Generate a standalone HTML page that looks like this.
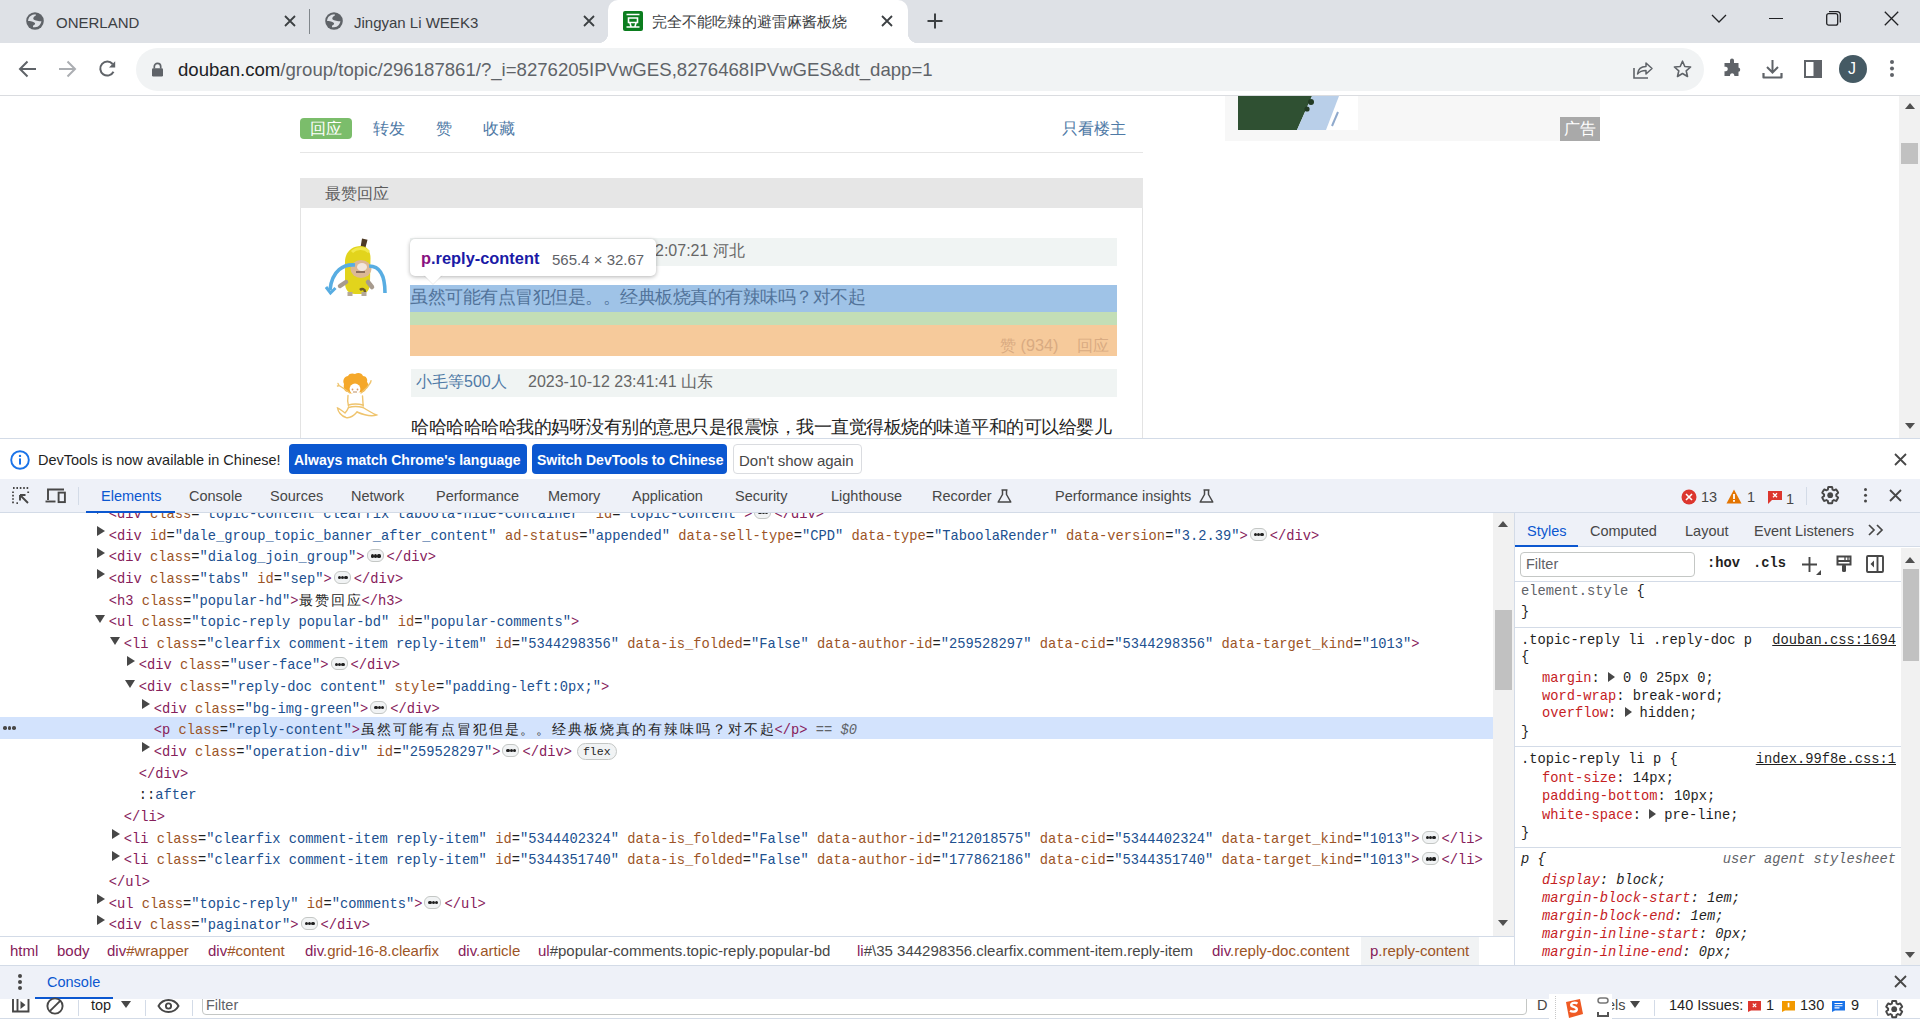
<!DOCTYPE html>
<html><head><meta charset="utf-8">
<style>
*{box-sizing:border-box;margin:0;padding:0}
html,body{width:1920px;height:1020px;overflow:hidden;background:#fff;font-family:"Liberation Sans",sans-serif;color:#202124}
.a{position:absolute}
.t{position:absolute;white-space:nowrap;line-height:1}
svg{position:absolute;overflow:visible}
/* chrome */
#tabstrip{left:0;top:0;width:1920px;height:43px;background:#dee1e6}
#toolbar{left:0;top:43px;width:1920px;height:53px;background:#fff;border-bottom:1px solid #dadce0}
#omni{left:136px;top:48px;width:1568px;height:43px;border-radius:22px;background:#f1f3f4}
/* page */
#page{left:0;top:96px;width:1920px;height:342px;background:#fff;overflow:hidden}
.pg{font-family:"Liberation Sans",sans-serif}
/* devtools */
#dt{left:0;top:438px;width:1920px;height:582px;background:#fff;border-top:1px solid #d3dbe7;overflow:hidden}
.mono{font-family:"Liberation Mono",monospace}
.ui{font-size:14.5px;color:#474747}
.bcr{font-size:15px}
.b14{font-size:14px;font-weight:bold}
.k i{display:inline-block;font-style:normal;text-align:center;width:16px}
.k15 i{width:15px}.k175 i{width:17.5px}.k16 i{width:16px}.k1575 i{width:15.75px}.k1604 i{width:15.95px}
.nocjk .k i{-webkit-text-fill-color:transparent;position:relative}
.nocjk .k i::before{content:"";position:absolute;left:.06em;right:.06em;top:.1em;height:.84em;opacity:.7;background:linear-gradient(currentColor,currentColor) 0 0/100% .1em no-repeat,linear-gradient(currentColor,currentColor) 0 50%/100% .1em no-repeat,linear-gradient(currentColor,currentColor) 0 100%/100% .1em no-repeat,linear-gradient(currentColor,currentColor) 0 0/.1em 100% no-repeat,linear-gradient(currentColor,currentColor) 50% 0/.1em 100% no-repeat,linear-gradient(currentColor,currentColor) 100% 0/.1em 100% no-repeat}
.b{font-weight:bold}
.er{position:absolute;white-space:pre;font-family:"Liberation Mono",monospace;font-size:13.75px;line-height:21.64px;color:#1f1f1f}
.tg{color:#86205a}.an{color:#9c5426}.av{color:#20508f}
.cjk{display:inline-block;overflow:hidden;vertical-align:top;font-size:16px;height:21px}.pu{color:#1f1f1f}.tx{color:#1f1f1f}
.ps{color:#20508f}
.eq{color:#5f6368}.eq i{font-style:italic}
.bd{display:inline-block;position:relative;width:17px;height:13px;margin:0 3px 0 2px;vertical-align:-1px;border:1px solid #c4c7c5;border-radius:6px;background:#f1f3f4}
.bd i{position:absolute;top:4.1px;width:3.2px;height:3.2px;border-radius:50%;background:#1f1f1f}
.bd i:nth-child(1){left:3px}.bd i:nth-child(2){left:6.4px}.bd i:nth-child(3){left:9.8px}
.fx{display:inline-block;margin-left:5px;padding:0 5px;height:17px;line-height:15px;border:1px solid #c4c7c5;border-radius:9px;background:#f1f3f4;font-size:11.5px;vertical-align:1px;color:#1f1f1f}
.trr{width:0;height:0;border-left:8px solid #474747;border-top:5.4px solid transparent;border-bottom:5.4px solid transparent}
.trd{width:0;height:0;border-top:8px solid #474747;border-left:5.4px solid transparent;border-right:5.4px solid transparent}
.dots3 i{position:absolute;top:0;width:3.5px;height:3.5px;border-radius:50%;background:#474747}
.dots3 i:nth-child(1){left:0}.dots3 i:nth-child(2){left:4.5px}.dots3 i:nth-child(3){left:9px}
.bt{color:#86205a}.bc{color:#9c5426}.bg{color:#474747}
.sr{position:absolute;white-space:pre;font-family:"Liberation Mono",monospace;font-size:13.75px;line-height:18px;color:#1f1f1f}
.sr.it{font-style:italic}
.sel0{color:#5f6368}
.pn{color:#c5221f}
.lnk{text-decoration:underline;color:#1f1f1f}
.ua{font-style:italic;color:#5f6368}
.str{display:inline-block;width:0;height:0;border-left:7px solid #474747;border-top:5px solid transparent;border-bottom:5px solid transparent;margin-right:8px;vertical-align:0px}
</style></head><body>
<!-- ============ TAB STRIP ============ -->
<div id="tabstrip" class="a">
  <!-- tab 1 -->
  <svg style="left:26px;top:12px" width="18" height="18" viewBox="0 0 18 18"><circle cx="9" cy="9" r="8.8" fill="#5f6368"/><path d="M2.05 8.9C2.5 5 5 2.5 9.7 2.3L9.7 3.8C8 4.5 7.2 5.5 7.3 6.9C8 8 10 8.4 11.1 8.65C12.5 9 14 9.2 15.4 9.2C15 12 13 15 9 15.3L7 15.3L7 13.8C8 13.3 9.1 12.5 9.1 11.5C9 10.5 8 10 6 9.4C4.5 9 3 8.9 2.05 8.9Z" fill="#dee1e6"/></svg>
  <div class="t" style="left:56px;top:15px;font-size:15px;color:#3c4043">ONERLAND</div>
  <svg style="left:284px;top:15px" width="12" height="12" viewBox="0 0 12 12"><path d="M1 1L11 11M11 1L1 11" stroke="#3c4043" stroke-width="1.8"/></svg>
  <div class="a" style="left:309px;top:9px;width:1px;height:25px;background:#80868b"></div>
  <!-- tab 2 -->
  <svg style="left:325px;top:12px" width="18" height="18" viewBox="0 0 18 18"><circle cx="9" cy="9" r="8.8" fill="#5f6368"/><path d="M2.05 8.9C2.5 5 5 2.5 9.7 2.3L9.7 3.8C8 4.5 7.2 5.5 7.3 6.9C8 8 10 8.4 11.1 8.65C12.5 9 14 9.2 15.4 9.2C15 12 13 15 9 15.3L7 15.3L7 13.8C8 13.3 9.1 12.5 9.1 11.5C9 10.5 8 10 6 9.4C4.5 9 3 8.9 2.05 8.9Z" fill="#dee1e6"/></svg>
  <div class="t" style="left:354px;top:15px;font-size:15px;color:#3c4043">Jingyan Li WEEK3</div>
  <svg style="left:583px;top:15px" width="12" height="12" viewBox="0 0 12 12"><path d="M1 1L11 11M11 1L1 11" stroke="#3c4043" stroke-width="1.8"/></svg>
  <!-- active tab -->
  <div class="a" style="left:608px;top:0px;width:300px;height:43px;background:#fff;border-radius:10px 10px 0 0"></div>
  <div class="a" style="left:598px;top:33px;width:10px;height:10px;background:radial-gradient(circle at 0 0,#dee1e6 10px,#fff 10.5px)"></div>
  <div class="a" style="left:908px;top:33px;width:10px;height:10px;background:radial-gradient(circle at 100% 0,#dee1e6 10px,#fff 10.5px)"></div>
  <div class="a" style="left:623px;top:11px;width:20px;height:20px;background:#0b7d1e;border-radius:2px"></div>
  <svg style="left:623px;top:11px" width="20" height="20" viewBox="0 0 20 20"><path d="M3.5 3.5h13M5.5 7h9v4.5h-9zM3.5 16h13M7 12l1 3.5M13 12l-1 3.5" stroke="#fff" stroke-width="1.6" fill="none"/></svg>
  <div class="t k k15" style="left:652px;top:14px;font-size:15px;color:#3c4043"><i>完</i><i>全</i><i>不</i><i>能</i><i>吃</i><i>辣</i><i>的</i><i>避</i><i>雷</i><i>麻</i><i>酱</i><i>板</i><i>烧</i></div>
  <svg style="left:881px;top:15px" width="12" height="12" viewBox="0 0 12 12"><path d="M1 1L11 11M11 1L1 11" stroke="#3c4043" stroke-width="1.8"/></svg>
  <!-- new tab -->
  <svg style="left:926px;top:12px" width="18" height="18" viewBox="0 0 18 18"><path d="M9 1.5V16.5M1.5 9H16.5" stroke="#3c4043" stroke-width="2"/></svg>
  <!-- window controls -->
  <svg style="left:1711px;top:14px" width="16" height="9" viewBox="0 0 16 9"><path d="M1 1L8 8L15 1" stroke="#202124" stroke-width="1.3" fill="none"/></svg>
  <div class="a" style="left:1769px;top:17.5px;width:14px;height:1.3px;background:#202124"></div>
  <svg style="left:1826px;top:11px" width="15" height="15" viewBox="0 0 15 15"><rect x="0.7" y="2.7" width="11" height="11.5" rx="2" stroke="#202124" stroke-width="1.3" fill="none"/><path d="M3 0.7h8.3a3 3 0 0 1 3 3V11.5" stroke="#202124" stroke-width="1.3" fill="none"/></svg>
  <svg style="left:1884px;top:11px" width="15" height="15" viewBox="0 0 15 15"><path d="M0.8 0.8L14.2 14.2M14.2 0.8L0.8 14.2" stroke="#202124" stroke-width="1.3"/></svg>
</div>
<!-- ============ TOOLBAR ============ -->
<div id="toolbar" class="a"></div>
<svg style="left:18px;top:60px" width="19" height="18" viewBox="0 0 19 18"><path d="M18 9H2.5M9.5 1.5L2 9l7.5 7.5" stroke="#5f6368" stroke-width="2" fill="none"/></svg>
<svg style="left:58px;top:60px" width="19" height="18" viewBox="0 0 19 18"><path d="M1 9h15.5M9.5 1.5L17 9l-7.5 7.5" stroke="#abaeb2" stroke-width="2" fill="none"/></svg>
<svg style="left:98px;top:60px" width="20" height="18" viewBox="0 0 20 18"><path d="M15.5 11.8A7 7 0 1 1 14.6 4" stroke="#5f6368" stroke-width="2" fill="none"/><path d="M17.2 1.2V7.5H11z" fill="#5f6368"/></svg>
<div id="omni" class="a"></div>
<svg style="left:151px;top:62px" width="13" height="15" viewBox="0 0 13 15"><path d="M3.3 6.5V4.5a3.2 3.2 0 0 1 6.4 0v2" stroke="#5f6368" stroke-width="1.7" fill="none"/><rect x="1" y="6.3" width="11" height="8.2" rx="1.2" fill="#5f6368"/></svg>
<div class="t" style="left:178px;top:60.5px;font-size:18.6px;color:#5f6368"><span style="color:#202124">douban.com</span>/group/topic/296187861/?_i=8276205IPVwGES,8276468IPVwGES&amp;dt_dapp=1</div>
<svg style="left:1633px;top:60px" width="20" height="19" viewBox="0 0 20 19"><path d="M1 8v10h14" stroke="#5f6368" stroke-width="1.6" fill="none"/><path d="M4.5 14c.5-4.5 3.5-7.5 8.5-7.5V3l6 5.5-6 5.5v-3.5c-3.5 0-6.5 1-8.5 3.5z" stroke="#5f6368" stroke-width="1.5" fill="none" stroke-linejoin="round"/></svg>
<svg style="left:1673px;top:60px" width="19" height="18" viewBox="0 0 19 18"><path d="M9.5 1.2l2.3 5.3 5.8.5-4.4 3.8 1.3 5.7-5-3-5 3 1.3-5.7L1.4 7l5.8-.5z" stroke="#5f6368" stroke-width="1.6" fill="none" stroke-linejoin="round"/></svg>
<svg style="left:1723px;top:59px" width="19" height="19" viewBox="0 0 19 19"><path d="M7 1.5a2 2 0 0 1 4 0V4h4.5v4.5a2.2 2.2 0 0 1 0 4.3V17H11.3v-1a2.2 2.2 0 0 0-4.3 0v1H1.5v-4.7H3a2.3 2.3 0 0 0 0-4.5H1.5V4H7z" fill="#5f6368"/></svg>
<svg style="left:1762px;top:59px" width="21" height="20" viewBox="0 0 21 20"><path d="M10.5 1v12M5 8l5.5 5.5L16 8" stroke="#5f6368" stroke-width="2" fill="none"/><path d="M1.5 14v4.5h18V14" stroke="#5f6368" stroke-width="2.2" fill="none" stroke-linejoin="round"/></svg>
<svg style="left:1804px;top:60px" width="18" height="18" viewBox="0 0 18 18"><rect x="1" y="1" width="16" height="16" fill="none" stroke="#5f6368" stroke-width="2"/><rect x="9.5" y="1" width="7.5" height="16" fill="#5f6368"/></svg>
<div class="a" style="left:1839px;top:55px;width:28px;height:28px;border-radius:50%;background:#455a64"></div>
<div class="t" style="left:1848px;top:61px;font-size:16px;color:#fff">J</div>
<div class="a" style="left:1890px;top:60px;width:4px;height:4px;border-radius:50%;background:#5f6368;box-shadow:0 6.5px 0 #5f6368,0 13px 0 #5f6368"></div>

<!-- ============ PAGE ============ -->
<div id="page" class="a">
  <!-- action row -->
  <div class="a" style="left:300px;top:22px;width:52px;height:21px;background:#7bbd6b;border-radius:4px"></div>
  <div class="t k k16" style="left:310px;top:25px;font-size:16px;color:#fff"><i>回</i><i>应</i></div>
  <div class="t k k16" style="left:373px;top:25px;font-size:16px;color:#4f7aa6"><i>转</i><i>发</i></div>
  <div class="t k k16" style="left:436px;top:25px;font-size:16px;color:#4f7aa6"><i>赞</i></div>
  <div class="t k k16" style="left:483px;top:25px;font-size:16px;color:#4f7aa6"><i>收</i><i>藏</i></div>
  <div class="t k k16" style="left:1062px;top:25px;font-size:16px;color:#4f7aa6"><i>只</i><i>看</i><i>楼</i><i>主</i></div>
  <div class="a" style="left:300px;top:56px;width:843px;height:1px;background:#e6e6e6"></div>
  <!-- popular header -->
  <div class="a" style="left:300px;top:82px;width:843px;height:30px;background:#e6e6e6"></div>
  <div class="t k k16" style="left:325px;top:90px;font-size:16px;color:#5c5c5c"><i>最</i><i>赞</i><i>回</i><i>应</i></div>
  <div class="a" style="left:300px;top:112px;width:843px;height:260px;border-left:1px solid #e3e3e3;border-right:1px solid #e3e3e3"></div>
  <!-- comment 1 -->
  <svg style="left:322px;top:138px" width="70" height="70" viewBox="0 0 70 70">
    <path d="M40 4.5l5.5 1.2-2.2 8.5-4.8-.8z" fill="#4d3a25"/>
    <path d="M39 12c6 0 9.5 5 9.5 12l-.5 24c0 8-3 12-9 12h-6c-6 0-10-4-10-11V28c0-9 6-16 16-16z" fill="#e2d41c"/>
    <path d="M30 18c4-4 12-5 17 0" stroke="#f1e84a" stroke-width="3" fill="none"/>
    <ellipse cx="39" cy="35" rx="10.5" ry="9" fill="#dcb895"/>
    <ellipse cx="40" cy="33" rx="5" ry="4" fill="#f3e7de"/>
    <path d="M34 38h9" stroke="#8b6f5b" stroke-width="2"/>
    <path d="M18 52l6-4M46 48l4 5" stroke="#a79b8e" stroke-width="4.5" stroke-linecap="round"/>
    <path d="M28 58v4M42 58v4" stroke="#b4a898" stroke-width="5"/>
    <path d="M38 56c2-2 5-1 5 2" stroke="#6b5a2a" stroke-width="2.5" fill="none"/>
    <path d="M33 31C22 30 10 36 8 56" stroke="#58ade2" stroke-width="3.6" fill="none"/>
    <path d="M47 32C57 32 63 40 63 59" stroke="#58ade2" stroke-width="3.6" fill="none"/>
    <path d="M4 53l4.5 6 5-5" stroke="#58ade2" stroke-width="3" fill="none"/>
  </svg>
  <div class="a" style="left:410px;top:142px;width:707px;height:28px;background:#f0f4f3"></div>
  <div class="t k k16" style="left:655px;top:147px;font-size:16px;color:#666">2:07:21 <i>河</i><i>北</i></div>
  <div class="a" style="left:410px;top:189px;width:707px;height:27px;background:#9fc3e7"></div>
  <div class="a" style="left:410px;top:216px;width:707px;height:13px;background:#c3deb6"></div>
  <div class="a" style="left:410px;top:229px;width:707px;height:31px;background:#f6ca9b"></div>
  <div class="t k k175" style="left:410px;top:193px;font-size:17.5px;letter-spacing:-0.5px;color:#52739a"><i>虽</i><i>然</i><i>可</i><i>能</i><i>有</i><i>点</i><i>冒</i><i>犯</i><i>但</i><i>是</i><i>。</i><i>。</i><i>经</i><i>典</i><i>板</i><i>烧</i><i>真</i><i>的</i><i>有</i><i>辣</i><i>味</i><i>吗</i><i>？</i><i>对</i><i>不</i><i>起</i></div>
  <div class="t k k16" style="left:1000px;top:241px;font-size:16.25px;color:#d9ab82"><i>赞</i> (934)</div><div class="t k k16" style="left:1077px;top:241px;font-size:16.25px;color:#d9ab82"><i>回</i><i>应</i></div>
  <!-- tooltip -->
  <div class="a" style="left:410px;top:143px;width:246px;height:37px;background:#fff;border-radius:5px;box-shadow:0 1px 4px rgba(0,0,0,.3)"></div>
  <svg style="left:424px;top:179px" width="18" height="10" viewBox="0 0 18 10"><path d="M0 0L9 9L18 0z" fill="#fff"/><path d="M0 0.5L9 9.5L18 0.5" stroke="rgba(0,0,0,.08)" fill="none"/></svg>
  <div class="t" style="left:421px;top:154px;font-size:16.4px;font-weight:bold;color:#1a1aa6"><span style="color:#881280">p</span>.reply-content</div>
  <div class="t" style="left:552px;top:156px;font-size:15px;color:#5f6368">565.4 × 32.67</div>
  <!-- comment 2 -->
  <svg style="left:330px;top:272px" width="55" height="55" viewBox="0 0 55 55">
    <path d="M14 16c-2-4 1-8 4-8 1-3 5-3 7-2 3-2 7-1 8 2 3 0 5 3 4 6 2 2 1 6-1 7-1 3-4 4-6 3-3 2-9 2-12 0-3 0-5-3-4-8z" fill="#f5a82a"/>
    <circle cx="25" cy="21" r="5.4" fill="#fff"/>
    <circle cx="22.5" cy="21.5" r=".9" fill="#d49a6a"/><circle cx="27.5" cy="21.5" r=".9" fill="#d49a6a"/><path d="M23 24h4" stroke="#c9a07a" stroke-width="1.2"/>
    <g stroke="#efc46e" stroke-width="1.4" fill="none" stroke-linecap="round">
    <path d="M20 25L13 20L9 17.5M9 17.5l-1-2M9 17.5l-1.5.5"/>
    <path d="M31 25L37 19.5L40.5 14.5M40.5 14.5l.5-1.8"/>
    <path d="M18 27.5C17.5 31 17.5 35 18.5 38"/>
    <path d="M32.5 28C32.8 32 33 35 33.2 38"/>
    <path d="M18.5 37C22 36 29 36 33 37M18.5 39.5C22 38.5 29 38.5 33 39.5"/>
    <path d="M18.5 39.5C17.5 42 16.5 43.5 15 45C12 43 9.5 40.5 7.5 40C8 43.5 11 48 16 49.5C20.5 50.5 24 47.5 27 44"/>
    <path d="M33 39.5C37 42 42 45 46.5 47C42 48.5 35 47.5 27 44"/>
    </g>
  </svg>
  <div class="a" style="left:411px;top:273px;width:706px;height:28px;background:#f0f4f3"></div>
  <div class="t k k16" style="left:416px;top:278px;font-size:16px;color:#4f7aa6"><i>小</i><i>毛</i><i>等</i>500<i>人</i></div>
  <div class="t k k16" style="left:528px;top:278px;font-size:16px;color:#666">2023-10-12 23:41:41 <i>山</i><i>东</i></div>
  <div class="t k k175" style="left:411px;top:323px;font-size:17.5px;letter-spacing:-0.5px;color:#222"><i>哈</i><i>哈</i><i>哈</i><i>哈</i><i>哈</i><i>哈</i><i>我</i><i>的</i><i>妈</i><i>呀</i><i>没</i><i>有</i><i>别</i><i>的</i><i>意</i><i>思</i><i>只</i><i>是</i><i>很</i><i>震</i><i>惊</i><i>，</i><i>我</i><i>一</i><i>直</i><i>觉</i><i>得</i><i>板</i><i>烧</i><i>的</i><i>味</i><i>道</i><i>平</i><i>和</i><i>的</i><i>可</i><i>以</i><i>给</i><i>婴</i><i>儿</i></div>
  <!-- ad -->
  <div class="a" style="left:1225px;top:0px;width:375px;height:45px;background:#f7f7f7"></div>
  <div class="a" style="left:1238px;top:0px;width:120px;height:34px;background:#fff"></div>
  <svg style="left:1238px;top:0px" width="120" height="34" viewBox="0 0 120 34"><path d="M0 0H74L59 34H0z" fill="#2f5032"/><path d="M74 0H101L88 34H59z" fill="#b9cfe9"/><circle cx="73" cy="6" r="3" fill="#223a24"/><circle cx="69" cy="13" r="2.6" fill="#223a24"/><path d="M100 16l-6 14" stroke="#8fa9cc" stroke-width="2"/></svg>
  <div class="a" style="left:1560px;top:21px;width:40px;height:24px;background:#a9a9a9"></div>
  <div class="t k k16" style="left:1564px;top:25px;font-size:16px;color:#fff"><i>广</i><i>告</i></div>
  <!-- scrollbar -->
  <div class="a" style="left:1899px;top:0;width:21px;height:342px;background:#f1f1f1"></div>
  <svg style="left:1905px;top:7px" width="10" height="6" viewBox="0 0 10 6"><path d="M0 6L5 0L10 6z" fill="#505050"/></svg>
  <div class="a" style="left:1901px;top:47px;width:17px;height:21px;background:#c1c1c1"></div>
  <svg style="left:1905px;top:327px" width="10" height="6" viewBox="0 0 10 6"><path d="M0 0L5 6L10 0z" fill="#505050"/></svg>
</div>

<!-- ============ DEVTOOLS ============ -->
<div id="dt" class="a">
<!-- infobar -->
<svg style="left:10px;top:11px" width="20" height="20" viewBox="0 0 20 20"><circle cx="10" cy="10" r="8.8" stroke="#1a73e8" stroke-width="1.9" fill="none"/><circle cx="10" cy="5.9" r="1.2" fill="#1a73e8"/><rect x="9" y="8.3" width="2" height="6.4" rx=".8" fill="#1a73e8"/></svg>
<div class="t ui" style="left:38px;top:14px;color:#1f1f1f">DevTools is now available in Chinese!</div>
<div class="a" style="left:289px;top:5px;width:238px;height:30px;background:#0b57d0;border-radius:4px"></div>
<div class="t ui b14" style="left:294px;top:14px;color:#fff">Always match Chrome's language</div>
<div class="a" style="left:532px;top:5px;width:195px;height:30px;background:#0b57d0;border-radius:4px"></div>
<div class="t ui b14" style="left:537px;top:14px;color:#fff">Switch DevTools to Chinese</div>
<div class="a" style="left:733px;top:5px;width:129px;height:30px;background:#fff;border:1px solid #dadce0;border-radius:4px"></div>
<div class="t ui" style="left:739px;top:13.5px;font-size:15px;color:#474747">Don't show again</div>
<svg style="left:1894px;top:14px" width="13" height="13" viewBox="0 0 13 13"><path d="M1 1L12 12M12 1L1 12" stroke="#474747" stroke-width="1.8"/></svg>
<!-- main tab bar -->
<div class="a" style="left:0;top:40px;width:1920px;height:34px;background:#eef1f8;border-bottom:1px solid #d3dbe7"></div>
<svg style="left:12px;top:48px" width="18" height="18" viewBox="0 0 18 18"><path d="M1 1h1.6M4.4 1h1.6M7.8 1h1.6M11.2 1h1.6M14.6 1h1.6M1 4.4v1.6M1 7.8v1.6M1 11.2v1.6M1 14.6v1.6M4.4 16.2h1.6M16.2 4.4v1.6" stroke="#474747" stroke-width="1.8"/><path d="M8 8l8 8M8 8h5.5M8 8v5.5" stroke="#474747" stroke-width="1.9" fill="none"/></svg>
<svg style="left:45px;top:48px" width="22" height="17" viewBox="0 0 22 17"><path d="M3 13V2.5h16" stroke="#474747" stroke-width="1.9" fill="none"/><path d="M0.5 14.5h10" stroke="#474747" stroke-width="1.9"/><rect x="13.6" y="5.6" width="6.3" height="9.5" stroke="#474747" stroke-width="1.9" fill="none"/></svg>
<div class="a" style="left:78px;top:48px;width:1px;height:18px;background:#d3dbe7"></div>
<div class="t ui" style="left:101px;top:50px;color:#0b57d0">Elements</div>
<div class="a" style="left:86px;top:72px;width:89px;height:2px;background:#0b57d0"></div>
<div class="t ui" style="left:189px;top:50px">Console</div>
<div class="t ui" style="left:270px;top:50px">Sources</div>
<div class="t ui" style="left:351px;top:50px">Network</div>
<div class="t ui" style="left:436px;top:50px">Performance</div>
<div class="t ui" style="left:548px;top:50px">Memory</div>
<div class="t ui" style="left:632px;top:50px">Application</div>
<div class="t ui" style="left:735px;top:50px">Security</div>
<div class="t ui" style="left:831px;top:50px">Lighthouse</div>
<div class="t ui" style="left:932px;top:50px">Recorder</div>
<svg style="left:997px;top:50px" width="15" height="14" viewBox="0 0 15 14"><path d="M4.5 1h6M5.5 1v4.5L1.2 13h12.6L9.5 5.5V1" stroke="#474747" stroke-width="1.5" fill="none" stroke-linejoin="round"/></svg>
<div class="t ui" style="left:1055px;top:50px">Performance insights</div>
<svg style="left:1199px;top:50px" width="15" height="14" viewBox="0 0 15 14"><path d="M4.5 1h6M5.5 1v4.5L1.2 13h12.6L9.5 5.5V1" stroke="#474747" stroke-width="1.5" fill="none" stroke-linejoin="round"/></svg>
<!-- right icons -->
<svg style="left:1681px;top:50px" width="16" height="16" viewBox="0 0 16 16"><circle cx="8" cy="8" r="7.5" fill="#dc362e"/><path d="M5 5l6 6M11 5l-6 6" stroke="#fff" stroke-width="1.6"/></svg>
<div class="t ui" style="left:1701px;top:51px">13</div>
<svg style="left:1726px;top:50px" width="16" height="15" viewBox="0 0 16 15"><path d="M8 .5L15.5 14.5H.5z" fill="#e37400"/><rect x="7.1" y="5" width="1.8" height="5" fill="#fff"/><rect x="7.1" y="11" width="1.8" height="1.8" fill="#fff"/></svg>
<div class="t ui" style="left:1747px;top:51px">1</div>
<svg style="left:1768px;top:51px" width="14" height="14" viewBox="0 0 14 14"><path d="M0 1h14v9H4l-4 4z" fill="#dc362e"/><path d="M5 3.3l4 4M9 3.3l-4 4" stroke="#fff" stroke-width="1.3"/></svg>
<div class="t ui" style="left:1786px;top:53px">1</div>
<div class="a" style="left:1806px;top:48px;width:1px;height:18px;background:#d3dbe7"></div>
<svg style="left:1820.2px;top:46.3px" width="20.4" height="20.4" viewBox="0 0 24 24"><path d="M19.14 12.94c.04-.3.06-.61.06-.94 0-.32-.02-.64-.07-.94l2.03-1.58c.18-.14.23-.41.12-.61l-1.92-3.32c-.12-.22-.37-.29-.59-.22l-2.39.96c-.5-.38-1.03-.7-1.62-.94L14.4 2.81c-.04-.24-.24-.41-.48-.41h-3.84c-.24 0-.43.17-.47.41L9.25 5.35c-.59.24-1.13.57-1.62.94L5.24 5.33c-.22-.08-.47 0-.59.22L2.74 8.87c-.12.21-.08.47.12.61l2.03 1.58c-.05.3-.09.63-.09.94s.02.64.07.94l-2.03 1.58c-.18.14-.23.41-.12.61l1.92 3.32c.12.22.37.29.59.22l2.39-.96c.5.38 1.03.7 1.62.94l.36 2.54c.05.24.24.41.48.41h3.84c.24 0 .44-.17.47-.41l.36-2.54c.59-.24 1.13-.56 1.62-.94l2.39.96c.22.08.47 0 .59-.22l1.92-3.32c.12-.22.07-.47-.12-.61z" fill="none" stroke="#474747" stroke-width="2.3" stroke-linejoin="round"/><circle cx="12" cy="12" r="3.4" fill="#474747"/></svg>
<div class="a" style="left:1863.5px;top:48.5px;width:3.6px;height:3.6px;border-radius:50%;background:#474747;box-shadow:0 5.7px 0 #474747,0 11.4px 0 #474747"></div>
<svg style="left:1889px;top:50px" width="13" height="13" viewBox="0 0 13 13"><path d="M1 1L12 12M12 1L1 12" stroke="#474747" stroke-width="1.8"/></svg>
<!-- elements panel -->
<div class="a" style="left:0;top:74px;width:1493px;height:423px;overflow:hidden" id="elpanel">
<div class="a trr" style="left:96.95px;top:-8.70px"></div>
<div class="er" style="left:108.75px;top:-9.02px"><span class="tg">&lt;div</span> <span class="an">class</span><span class="pu">=</span><span class="av">"topic-content clearfix taboola-hide-container"</span> <span class="an">id</span><span class="pu">=</span><span class="av">"topic-content"</span><span class="tg">&gt;</span><span class="bd"><i></i><i></i><i></i></span><span class="tg">&lt;/div&gt;</span></div>
<div class="a trr" style="left:96.95px;top:12.94px"></div>
<div class="er" style="left:108.75px;top:12.62px"><span class="tg">&lt;div</span> <span class="an">id</span><span class="pu">=</span><span class="av">"dale_group_topic_banner_after_content"</span> <span class="an">ad-status</span><span class="pu">=</span><span class="av">"appended"</span> <span class="an">data-sell-type</span><span class="pu">=</span><span class="av">"CPD"</span> <span class="an">data-type</span><span class="pu">=</span><span class="av">"TaboolaRender"</span> <span class="an">data-version</span><span class="pu">=</span><span class="av">"3.2.39"</span><span class="tg">&gt;</span><span class="bd"><i></i><i></i><i></i></span><span class="tg">&lt;/div&gt;</span></div>
<div class="a trr" style="left:96.95px;top:34.58px"></div>
<div class="er" style="left:108.75px;top:34.26px"><span class="tg">&lt;div</span> <span class="an">class</span><span class="pu">=</span><span class="av">"dialog_join_group"</span><span class="tg">&gt;</span><span class="bd"><i></i><i></i><i></i></span><span class="tg">&lt;/div&gt;</span></div>
<div class="a trr" style="left:96.95px;top:56.22px"></div>
<div class="er" style="left:108.75px;top:55.90px"><span class="tg">&lt;div</span> <span class="an">class</span><span class="pu">=</span><span class="av">"tabs"</span> <span class="an">id</span><span class="pu">=</span><span class="av">"sep"</span><span class="tg">&gt;</span><span class="bd"><i></i><i></i><i></i></span><span class="tg">&lt;/div&gt;</span></div>
<div class="er" style="left:108.75px;top:77.54px"><span class="tg">&lt;h3</span> <span class="an">class</span><span class="pu">=</span><span class="av">"popular-hd"</span><span class="tg">&gt;</span><span class="tx k k1575"><i>最</i><i>赞</i><i>回</i><i>应</i></span><span class="tg">&lt;/h3&gt;</span></div>
<div class="a trd" style="left:95.45px;top:102.00px"></div>
<div class="er" style="left:108.75px;top:99.18px"><span class="tg">&lt;ul</span> <span class="an">class</span><span class="pu">=</span><span class="av">"topic-reply popular-bd"</span> <span class="an">id</span><span class="pu">=</span><span class="av">"popular-comments"</span><span class="tg">&gt;</span></div>
<div class="a trd" style="left:110.45px;top:123.64px"></div>
<div class="er" style="left:123.75px;top:120.82px"><span class="tg">&lt;li</span> <span class="an">class</span><span class="pu">=</span><span class="av">"clearfix comment-item reply-item"</span> <span class="an">id</span><span class="pu">=</span><span class="av">"5344298356"</span> <span class="an">data-is_folded</span><span class="pu">=</span><span class="av">"False"</span> <span class="an">data-author-id</span><span class="pu">=</span><span class="av">"259528297"</span> <span class="an">data-cid</span><span class="pu">=</span><span class="av">"5344298356"</span> <span class="an">data-target_kind</span><span class="pu">=</span><span class="av">"1013"</span><span class="tg">&gt;</span></div>
<div class="a trr" style="left:126.95px;top:142.78px"></div>
<div class="er" style="left:138.75px;top:142.46px"><span class="tg">&lt;div</span> <span class="an">class</span><span class="pu">=</span><span class="av">"user-face"</span><span class="tg">&gt;</span><span class="bd"><i></i><i></i><i></i></span><span class="tg">&lt;/div&gt;</span></div>
<div class="a trd" style="left:125.45px;top:166.92px"></div>
<div class="er" style="left:138.75px;top:164.10px"><span class="tg">&lt;div</span> <span class="an">class</span><span class="pu">=</span><span class="av">"reply-doc content"</span> <span class="an">style</span><span class="pu">=</span><span class="av">"padding-left:0px;"</span><span class="tg">&gt;</span></div>
<div class="a trr" style="left:141.95px;top:186.06px"></div>
<div class="er" style="left:153.75px;top:185.74px"><span class="tg">&lt;div</span> <span class="an">class</span><span class="pu">=</span><span class="av">"bg-img-green"</span><span class="tg">&gt;</span><span class="bd"><i></i><i></i><i></i></span><span class="tg">&lt;/div&gt;</span></div>
<div class="a" style="left:0;top:204.20px;width:1493px;height:22px;background:#d3e3fd"></div>
<div class="a dots3" style="left:3px;top:213.20px"><i></i><i></i><i></i></div>
<div class="er" style="left:153.75px;top:207.38px"><span class="tg">&lt;p</span> <span class="an">class</span><span class="pu">=</span><span class="av">"reply-content"</span><span class="tg">&gt;</span><span class="tx k k1604"><i>虽</i><i>然</i><i>可</i><i>能</i><i>有</i><i>点</i><i>冒</i><i>犯</i><i>但</i><i>是</i><i>。</i><i>。</i><i>经</i><i>典</i><i>板</i><i>烧</i><i>真</i><i>的</i><i>有</i><i>辣</i><i>味</i><i>吗</i><i>？</i><i>对</i><i>不</i><i>起</i></span><span class="tg">&lt;/p&gt;</span><span class="eq"> == <i>$0</i></span></div>
<div class="a trr" style="left:141.95px;top:229.34px"></div>
<div class="er" style="left:153.75px;top:229.02px"><span class="tg">&lt;div</span> <span class="an">class</span><span class="pu">=</span><span class="av">"operation-div"</span> <span class="an">id</span><span class="pu">=</span><span class="av">"259528297"</span><span class="tg">&gt;</span><span class="bd"><i></i><i></i><i></i></span><span class="tg">&lt;/div&gt;</span><span class="fx">flex</span></div>
<div class="er" style="left:138.75px;top:250.66px"><span class="tg">&lt;/div&gt;</span></div>
<div class="er" style="left:138.75px;top:272.30px"><span class="pu">::</span><span class="ps">after</span></div>
<div class="er" style="left:123.75px;top:293.94px"><span class="tg">&lt;/li&gt;</span></div>
<div class="a trr" style="left:111.95px;top:315.90px"></div>
<div class="er" style="left:123.75px;top:315.58px"><span class="tg">&lt;li</span> <span class="an">class</span><span class="pu">=</span><span class="av">"clearfix comment-item reply-item"</span> <span class="an">id</span><span class="pu">=</span><span class="av">"5344402324"</span> <span class="an">data-is_folded</span><span class="pu">=</span><span class="av">"False"</span> <span class="an">data-author-id</span><span class="pu">=</span><span class="av">"212018575"</span> <span class="an">data-cid</span><span class="pu">=</span><span class="av">"5344402324"</span> <span class="an">data-target_kind</span><span class="pu">=</span><span class="av">"1013"</span><span class="tg">&gt;</span><span class="bd"><i></i><i></i><i></i></span><span class="tg">&lt;/li&gt;</span></div>
<div class="a trr" style="left:111.95px;top:337.54px"></div>
<div class="er" style="left:123.75px;top:337.22px"><span class="tg">&lt;li</span> <span class="an">class</span><span class="pu">=</span><span class="av">"clearfix comment-item reply-item"</span> <span class="an">id</span><span class="pu">=</span><span class="av">"5344351740"</span> <span class="an">data-is_folded</span><span class="pu">=</span><span class="av">"False"</span> <span class="an">data-author-id</span><span class="pu">=</span><span class="av">"177862186"</span> <span class="an">data-cid</span><span class="pu">=</span><span class="av">"5344351740"</span> <span class="an">data-target_kind</span><span class="pu">=</span><span class="av">"1013"</span><span class="tg">&gt;</span><span class="bd"><i></i><i></i><i></i></span><span class="tg">&lt;/li&gt;</span></div>
<div class="er" style="left:108.75px;top:358.86px"><span class="tg">&lt;/ul&gt;</span></div>
<div class="a trr" style="left:96.95px;top:380.82px"></div>
<div class="er" style="left:108.75px;top:380.50px"><span class="tg">&lt;ul</span> <span class="an">class</span><span class="pu">=</span><span class="av">"topic-reply"</span> <span class="an">id</span><span class="pu">=</span><span class="av">"comments"</span><span class="tg">&gt;</span><span class="bd"><i></i><i></i><i></i></span><span class="tg">&lt;/ul&gt;</span></div>
<div class="a trr" style="left:96.95px;top:402.46px"></div>
<div class="er" style="left:108.75px;top:402.14px"><span class="tg">&lt;div</span> <span class="an">class</span><span class="pu">=</span><span class="av">"paginator"</span><span class="tg">&gt;</span><span class="bd"><i></i><i></i><i></i></span><span class="tg">&lt;/div&gt;</span></div>
</div>
<!-- elements scrollbar -->
<div class="a" style="left:1493px;top:74px;width:21px;height:423px;background:#f1f1f1"></div>
<svg style="left:1498px;top:82px" width="10" height="6" viewBox="0 0 10 6"><path d="M0 6L5 0L10 6z" fill="#505050"/></svg>
<div class="a" style="left:1495px;top:171px;width:17px;height:80px;background:#c1c1c1"></div>
<svg style="left:1498px;top:481px" width="10" height="6" viewBox="0 0 10 6"><path d="M0 0L5 6L10 0z" fill="#505050"/></svg>
<!-- split border -->
<div class="a" style="left:1514px;top:74px;width:1px;height:452px;background:#d3dbe7"></div>
<!-- breadcrumbs -->
<div class="a" style="left:0;top:497px;width:1514px;height:1px;background:#d3dbe7"></div>
<div class="a" style="left:1361px;top:498px;width:118px;height:28px;background:#f1f3f4"></div>
<div class="t ui bcr" style="left:10px;top:504px"><span class="bt">html</span></div>
<div class="t ui bcr" style="left:57px;top:504px"><span class="bt">body</span></div>
<div class="t ui bcr" style="left:107px;top:504px"><span class="bt">div</span><span class="bc">#wrapper</span></div>
<div class="t ui bcr" style="left:208px;top:504px"><span class="bt">div</span><span class="bc">#content</span></div>
<div class="t ui bcr" style="left:305px;top:504px"><span class="bt">div</span><span class="bc">.grid-16-8.clearfix</span></div>
<div class="t ui bcr" style="left:458px;top:504px"><span class="bt">div</span><span class="bc">.article</span></div>
<div class="t ui bcr" style="left:538px;top:504px"><span class="bt">ul</span><span class="bg">#popular-comments.topic-reply.popular-bd</span></div>
<div class="t ui bcr" style="left:857px;top:504px"><span class="bt">li</span><span class="bg">#\35 344298356.clearfix.comment-item.reply-item</span></div>
<div class="t ui bcr" style="left:1212px;top:504px"><span class="bt">div</span><span class="bc">.reply-doc.content</span></div>
<div class="t ui bcr" style="left:1370px;top:504px"><span class="bt">p</span><span class="bc">.reply-content</span></div>
<!-- styles pane -->
<div class="a" style="left:1515px;top:74px;width:405px;height:34px;background:#eef1f8;border-bottom:1px solid #d3dbe7"></div>
<div class="t ui" style="left:1527px;top:85px;color:#0b57d0">Styles</div>
<div class="a" style="left:1515px;top:106px;width:63px;height:2px;background:#0b57d0"></div>
<div class="t ui" style="left:1590px;top:85px">Computed</div>
<div class="t ui" style="left:1685px;top:85px">Layout</div>
<div class="t ui" style="left:1754px;top:85px">Event Listeners</div>
<svg style="left:1868px;top:85px" width="17" height="12" viewBox="0 0 17 12"><path d="M1 1l5 5-5 5M9 1l5 5-5 5" stroke="#474747" stroke-width="1.7" fill="none"/></svg>
<div class="a" style="left:1519.5px;top:113px;width:175px;height:25px;border:1px solid #c4c7c5;border-radius:4px;background:#fff"></div>
<div class="t ui" style="left:1526px;top:118px;color:#5f6368">Filter</div>
<div class="t mono b" style="left:1707px;top:118px;font-size:13.75px;color:#1f1f1f">:hov</div>
<div class="t mono b" style="left:1753px;top:118px;font-size:13.75px;color:#1f1f1f">.cls</div>
<svg style="left:1801px;top:555px" width="0" height="0"></svg>
<svg style="left:1801px;top:117px" width="21" height="19" viewBox="0 0 21 19"><path d="M8.5 1v15M1 8.5h15" stroke="#474747" stroke-width="1.9"/><path d="M20 14v5h-5z" fill="#474747"/></svg>
<svg style="left:1836px;top:116px" width="16" height="18" viewBox="0 0 16 18"><path d="M1.5 1.5h13v8h-13z" stroke="#474747" stroke-width="2" fill="none"/><path d="M1.5 6h13" stroke="#474747" stroke-width="2"/><path d="M9 1.5v4M12 1.5v4" stroke="#474747" stroke-width="1.3"/><rect x="6" y="9.5" width="4" height="7.5" rx="1.5" fill="#474747"/></svg>
<svg style="left:1866px;top:116px" width="18" height="18" viewBox="0 0 18 18"><rect x="1" y="1" width="16" height="16" rx="1" stroke="#474747" stroke-width="1.9" fill="none"/><path d="M11.5 1v16" stroke="#474747" stroke-width="1.9"/><path d="M8 5.5v7L4.5 9z" fill="#474747"/></svg>
<div class="a" style="left:1515px;top:142px;width:386px;height:1px;background:#d3dbe7"></div>
<!-- styles scrollbar -->
<div class="a" style="left:1901px;top:109px;width:19px;height:417px;background:#f1f1f1"></div>
<svg style="left:1905px;top:118px" width="10" height="6" viewBox="0 0 10 6"><path d="M0 6L5 0L10 6z" fill="#505050"/></svg>
<div class="a" style="left:1903px;top:130px;width:16px;height:92px;background:#c1c1c1"></div>
<svg style="left:1905px;top:513px" width="10" height="6" viewBox="0 0 10 6"><path d="M0 0L5 6L10 0z" fill="#505050"/></svg>
<div class="sr" style="left:1521.0px;top:144.00px"><span class="sel0">element.style</span> {</div>
<div class="sr" style="left:1521.0px;top:165.00px">}</div>
<div class="a" style="left:1515px;top:188.0px;width:386px;height:1px;background:#d3dbe7"></div>
<div class="sr" style="left:1521.0px;top:192.50px">.topic-reply li .reply-doc p</div>
<div class="sr lnk" style="right:24px;top:192.50px">douban.css:1694</div>
<div class="sr" style="left:1521.0px;top:210.00px">{</div>
<div class="sr" style="left:1542.0px;top:230.80px"><span class="pn">margin</span>: <span class="str"></span>0 0 25px 0;</div>
<div class="sr" style="left:1542.0px;top:248.50px"><span class="pn">word-wrap</span>: break-word;</div>
<div class="sr" style="left:1542.0px;top:266.00px"><span class="pn">overflow</span>: <span class="str"></span>hidden;</div>
<div class="sr" style="left:1521.0px;top:285.00px">}</div>
<div class="a" style="left:1515px;top:307.0px;width:386px;height:1px;background:#d3dbe7"></div>
<div class="sr" style="left:1521.0px;top:312.00px">.topic-reply li p {</div>
<div class="sr lnk" style="right:24px;top:312.00px">index.99f8e.css:1</div>
<div class="sr" style="left:1542.0px;top:331.20px"><span class="pn">font-size</span>: 14px;</div>
<div class="sr" style="left:1542.0px;top:349.40px"><span class="pn">padding-bottom</span>: 10px;</div>
<div class="sr" style="left:1542.0px;top:367.60px"><span class="pn">white-space</span>: <span class="str"></span>pre-line;</div>
<div class="sr" style="left:1521.0px;top:385.70px">}</div>
<div class="a" style="left:1515px;top:408.0px;width:386px;height:1px;background:#d3dbe7"></div>
<div class="sr it" style="left:1521.0px;top:412.00px">p {</div>
<div class="sr ua" style="right:24px;top:412.00px">user agent stylesheet</div>
<div class="sr it" style="left:1542.0px;top:432.70px"><span class="pn">display</span>: block;</div>
<div class="sr it" style="left:1542.0px;top:450.70px"><span class="pn">margin-block-start</span>: 1em;</div>
<div class="sr it" style="left:1542.0px;top:468.70px"><span class="pn">margin-block-end</span>: 1em;</div>
<div class="sr it" style="left:1542.0px;top:486.70px"><span class="pn">margin-inline-start</span>: 0px;</div>
<div class="sr it" style="left:1542.0px;top:504.70px"><span class="pn">margin-inline-end</span>: 0px;</div>
<!-- drawer -->
<div class="a" style="left:0;top:526px;width:1920px;height:34px;background:#eef1f8;border-top:1px solid #d3dbe7"></div>
<div class="a" style="left:18px;top:535px;width:4px;height:4px;border-radius:50%;background:#474747;box-shadow:0 6px 0 #474747,0 12px 0 #474747"></div>
<div class="t ui" style="left:47px;top:536px;color:#0b57d0">Console</div>
<div class="a" style="left:35px;top:558px;width:78px;height:2px;background:#0b57d0"></div>
<svg style="left:1894px;top:536px" width="13" height="13" viewBox="0 0 13 13"><path d="M1 1L12 12M12 1L1 12" stroke="#474747" stroke-width="1.8"/></svg>
<!-- console toolbar -->
<div class="a" style="left:0;top:560px;width:1920px;height:20px;background:#fff;border-bottom:1px solid #d3dbe7"></div>
<div class="a" style="left:202px;top:556px;width:1325px;height:20px;border:1px solid #c4c7c5;border-radius:4px;background:#fff"></div>
<div class="a" style="left:0;top:556px;width:1920px;height:4px;background:#eef1f8"></div>
<div class="a" style="left:35px;top:558px;width:78px;height:2px;background:#0b57d0"></div>
<svg style="left:12px;top:560px" width="18" height="14" viewBox="0 0 18 14"><path d="M1 0v12.5h15.5V0M5.5 0v12.5" stroke="#474747" stroke-width="1.9" fill="none"/><path d="M8.5 2v8l5-4z" fill="#474747"/></svg>
<svg style="left:46px;top:558px" width="18" height="18" viewBox="0 0 18 18"><circle cx="9" cy="9" r="7.6" stroke="#474747" stroke-width="1.9" fill="none"/><path d="M3.8 14.2L14.2 3.8" stroke="#474747" stroke-width="1.9"/></svg>
<div class="a" style="left:78px;top:561px;width:1px;height:16px;background:#d3dbe7"></div>
<div class="t ui" style="left:91px;top:559px;color:#1f1f1f">top</div>
<svg style="left:121px;top:562px" width="10" height="8" viewBox="0 0 10 8"><path d="M0 0h10L5 7z" fill="#474747"/></svg>
<div class="a" style="left:145px;top:561px;width:1px;height:16px;background:#d3dbe7"></div>
<svg style="left:157px;top:560px" width="23" height="14" viewBox="0 0 23 14"><path d="M1.5 7C4 2.5 7.5 1 11.5 1s7.5 1.5 10 6c-2.5 4.5-6 6-10 6S4 11.5 1.5 7z" stroke="#474747" stroke-width="1.9" fill="none"/><circle cx="11.5" cy="7" r="2.6" stroke="#474747" stroke-width="1.9" fill="none"/></svg>
<div class="a" style="left:192px;top:561px;width:1px;height:16px;background:#d3dbe7"></div>
<div class="t ui" style="left:206px;top:559px;color:#5f6368">Filter</div>
<div class="t ui" style="left:1537px;top:559px;color:#474747">D</div>
<div class="t ui" style="left:1607px;top:559px;color:#474747">els</div>
<svg style="left:1630px;top:562px" width="10" height="8" viewBox="0 0 10 8"><path d="M0 0h10L5 7z" fill="#474747"/></svg>
<div class="a" style="left:1654px;top:561px;width:1px;height:16px;background:#d3dbe7"></div>
<div class="t ui" style="left:1669px;top:559px;color:#1f1f1f">140 Issues:</div>
<svg style="left:1748px;top:562px" width="13" height="11" viewBox="0 0 13 11"><path d="M0 0h13v9.5H3L0 11z" fill="#dc362e"/><path d="M4.8 2.7l3.4 3.4M8.2 2.7L4.8 6.1" stroke="#fff" stroke-width="1.2"/></svg>
<div class="t ui" style="left:1766px;top:559px;color:#1f1f1f">1</div>
<svg style="left:1782px;top:562px" width="13" height="11" viewBox="0 0 13 11"><path d="M0 0h13v9.5H3L0 11z" fill="#f29900"/><rect x="5.7" y="1.8" width="1.7" height="4.5" fill="#fff"/></svg>
<div class="t ui" style="left:1800px;top:559px;color:#1f1f1f">130</div>
<svg style="left:1832px;top:562px" width="13" height="11" viewBox="0 0 13 11"><path d="M0 0h13v9.5H3L0 11z" fill="#1a73e8"/><path d="M2.5 2.5h8M2.5 4.7h8M2.5 6.9h5" stroke="#fff" stroke-width="1.1"/></svg>
<div class="t ui" style="left:1851px;top:559px;color:#1f1f1f">9</div>
<div class="a" style="left:1877px;top:561px;width:1px;height:16px;background:#d3dbe7"></div>
<svg style="left:1884.0px;top:560.0px" width="20.4" height="20.4" viewBox="0 0 24 24"><path d="M19.14 12.94c.04-.3.06-.61.06-.94 0-.32-.02-.64-.07-.94l2.03-1.58c.18-.14.23-.41.12-.61l-1.92-3.32c-.12-.22-.37-.29-.59-.22l-2.39.96c-.5-.38-1.03-.7-1.62-.94L14.4 2.81c-.04-.24-.24-.41-.48-.41h-3.84c-.24 0-.43.17-.47.41L9.25 5.35c-.59.24-1.13.57-1.62.94L5.24 5.33c-.22-.08-.47 0-.59.22L2.74 8.87c-.12.21-.08.47.12.61l2.03 1.58c-.05.3-.09.63-.09.94s.02.64.07.94l-2.03 1.58c-.18.14-.23.41-.12.61l1.92 3.32c.12.22.37.29.59.22l2.39-.96c.5.38 1.03.7 1.62.94l.36 2.54c.05.24.24.41.48.41h3.84c.24 0 .44-.17.47-.41l.36-2.54c.59-.24 1.13-.56 1.62-.94l2.39.96c.22.08.47 0 .59-.22l1.92-3.32c.12-.22.07-.47-.12-.61z" fill="none" stroke="#474747" stroke-width="2.3" stroke-linejoin="round"/><circle cx="12" cy="12" r="3.4" fill="#474747"/></svg>
<!-- sogou IME overlay -->
<div class="a" style="left:1549px;top:555px;width:63px;height:27px;background:#fff"></div>
<div class="a" style="left:1555px;top:557px;width:0;height:25px;border-left:1.5px dotted #c8c8c8"></div>
<svg style="left:1563px;top:559px" width="22" height="22" viewBox="0 0 22 22"><path d="M3 4L17 1l3 15-14 4z" fill="#ef5a24"/><path d="M14.5 5.5c-2-1.2-6-1-6.3 1.3-.3 2.5 5.8 1.7 5.6 4.5-.2 2.6-4.5 2.8-6.8 1.4" stroke="#fff" stroke-width="2.4" fill="none"/></svg>
<svg style="left:1597px;top:558px" width="12" height="22" viewBox="0 0 12 22"><rect x="1" y="1" width="10" height="5" rx="2.5" stroke="#777" stroke-width="1.5" fill="none"/><path d="M1 15v4h10v-4" stroke="#555" stroke-width="2" fill="none"/></svg>

</div>
<script>
(function(){try{var d=document.createElement('span');d.style.cssText='position:absolute;left:-9999px;top:0;font:100px "Liberation Sans";white-space:nowrap';document.body.appendChild(d);
d.textContent='\u867d\u7136\u6709';var w1=d.getBoundingClientRect().width;d.textContent='\u0378\u0378\u0378';var w2=d.getBoundingClientRect().width;document.body.removeChild(d);
if(Math.abs(w1-w2)<0.5){document.documentElement.className+=' nocjk';}}catch(e){}})();
</script>
</body></html>
